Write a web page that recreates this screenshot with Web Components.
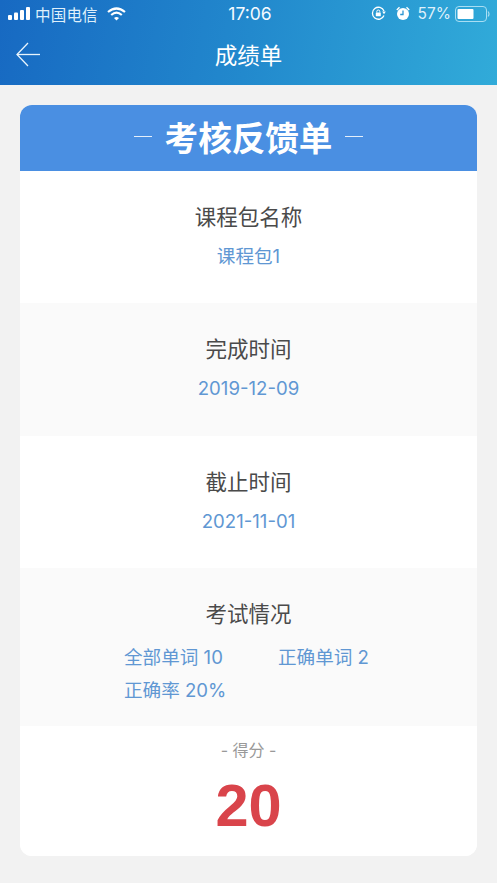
<!DOCTYPE html>
<html lang="zh">
<head>
<meta charset="utf-8">
<title>成绩单</title>
<style>
html, body { margin: 0; padding: 0; }
body {
    width: 497px;
    height: 883px;
    overflow: hidden;
    background: #f2f2f2;
    font-family: Inter, "Noto Sans CJK SC", sans-serif;
}
</style>
</head>
<body>
<app-header titulo="成绩单"></app-header>
<score-card>
    <info-row label="课程包名称" value="课程包1" style="height:132px"></info-row>
    <info-row label="完成时间" value="2019-12-09" alt style="height:133px"></info-row>
    <info-row label="截止时间" value="2021-11-01" style="height:132px"></info-row>
    <exam-row></exam-row>
    <score-total value="20"></score-total>
</score-card>
<script>
"use strict";
class AppHeader extends HTMLElement {
    constructor() {
        super();
        const shadow = this.attachShadow({ mode: "open" });
        shadow.innerHTML = `
        <style>
            :host {
                display: block;
                height: 85px;
                background: linear-gradient(100deg, #1769c2 0%, #2289cd 50%, #31abd9 100%);
                color: #fff;
            }
            #status {
                height: 27px;
                display: grid;
                grid-template-columns: 1fr auto 1fr;
                align-items: center;
                font-size: 15.5px;
                color: #dff0fb;
            }
            #left { display: flex; align-items: center; padding-left: 8px; }
            #left span { margin-left: 5px; letter-spacing: 0.2px; font-size: 15.5px; }
            #left svg.wifi { margin-left: 9px; }
            #time { font-size: 17.5px; color: #f4faff; padding-left: 3px; }
            #right { display: flex; align-items: center; justify-content: flex-end; padding-right: 7px; }
            #right span { margin-left: 7.500px; font-size: 15.5px; }
            #nav {
                height: 58px;
                position: relative;
                display: flex;
                align-items: center;
                justify-content: center;
                font-size: 22.5px;
            }
            #nav p { margin: 0 0 4px; }
            #back { position: absolute; left: 16px; top: 15px; }
        </style>
        <div id="status">
            <div id="left">
                <svg width="22" height="13" viewBox="0 0 22 13" fill="#fff">
                    <rect x="0" y="8" width="4" height="5" rx="1"/>
                    <rect x="6" y="5.500" width="4" height="7.500" rx="1"/>
                    <rect x="12" y="3" width="4" height="10" rx="1"/>
                    <rect x="18" y="0" width="4" height="13" rx="1"/>
                </svg>
                <span>中国电信</span>
                <svg class="wifi" width="19" height="14" viewBox="0 0 19 14" fill="none" stroke="#fff" stroke-width="2.200">
                    <path d="M1 5 Q9.500 -2 18 5"/>
                    <path d="M4.200 8 Q9.500 3.400 14.800 8"/>
                    <path d="M9.500 13.500 L7 11 Q9.500 8.800 12 11 Z" fill="#fff" stroke="none"/>
                </svg>
            </div>
            <div id="time">17:06</div>
            <div id="right">
                <svg width="15" height="15" viewBox="0 0 15 15" fill="none" stroke="#fff" stroke-width="1.300">
                    <path d="M13 9.500 A6 6 0 1 1 13 5"/>
                    <path d="M11.200 5.500 L14.800 5.500 L13 8.300 Z" fill="#fff" stroke="none"/>
                    <rect x="4.800" y="6.500" width="5" height="3.800" rx=".6" fill="#fff" stroke="none"/>
                    <path d="M5.800 6.500 V5.500 A1.500 1.500 0 0 1 8.800 5.500 V6.500" stroke-width="1"/>
                </svg>
                <svg width="14" height="15" viewBox="0 0 14 15" style="margin-left:10px" fill="#fff">
                    <circle cx="7" cy="8" r="6"/>
                    <path d="M7 4.500 V8.500 H4.200" fill="none" stroke="#2b95d2" stroke-width="1.300"/>
                    <path d="M0.300 3.500 L3 0.800 L4 1.800 L1.300 4.500 Z M13.700 3.500 L11 0.800 L10 1.800 L12.700 4.500 Z"/>
                </svg>
                <span>57%</span>
                <svg width="35" height="16" viewBox="0 0 35 16" style="margin-left:4px">
                    <rect x=".5" y=".5" width="31" height="15" rx="3.500" fill="none" stroke="#a9def3" stroke-width="1"/>
                    <rect x="2.500" y="3" width="16" height="10" rx="1" fill="#fff"/>
                    <path d="M33 5.500 Q35 8 33 10.500" fill="none" stroke="#a9def3" stroke-width="1.200"/>
                </svg>
            </div>
        </div>
        <div id="nav">
            <svg id="back" width="25" height="25" viewBox="0 0 25 25" fill="none" stroke="#e8f4fc" stroke-width="1.300">
                <path d="M12 1 L1 12.500 L12 24"/>
                <path d="M1 12.500 H24"/>
            </svg>
            <p id="titulo"></p>
        </div>`;
        this.titulo = shadow.getElementById("titulo");
    }
    connectedCallback() {
        this.titulo.textContent = this.getAttribute("titulo");
    }
}
customElements.define("app-header", AppHeader);

class ScoreCard extends HTMLElement {
    constructor() {
        super();
        const shadow = this.attachShadow({ mode: "open" });
        shadow.innerHTML = `
        <style>
            :host {
                display: block;
                margin: 20px 20px 0;
                background: #fff;
                border-radius: 12px;
                overflow: hidden;
            }
            #head {
                height: 66px;
                box-sizing: border-box;
                padding-bottom: 3px;
                background: #4a8fe2;
                color: #fff;
                display: flex;
                align-items: center;
                justify-content: center;
                gap: 13px;
            }
            #head i { width: 18px; height: 1px; background: #e4effb; display: block; }
            #head b {
                font-size: 33.600px;
                font-weight: 700;
                font-family: "Noto Sans CJK SC", sans-serif;
                line-height: 1;
            }
        </style>
        <div id="head"><i></i><b>考核反馈单</b><i></i></div>
        <slot></slot>`;
    }
}
customElements.define("score-card", ScoreCard);

class InfoRow extends HTMLElement {
    constructor() {
        super();
        const shadow = this.attachShadow({ mode: "open" });
        shadow.innerHTML = `
        <style>
            :host {
                display: block;
                box-sizing: border-box;
                padding-top: 32px;
                text-align: center;
                background: #fff;
            }
            :host([alt]) { background: #fafafa; }
            #label { font-size: 21.500px; line-height: 28px; color: #4a4a4a; }
            #value { margin-top: 12px; font-size: 18.600px; line-height: 26px; color: #6097d3; }
        </style>
        <div id="label"></div>
        <div id="value"></div>`;
        this.label = shadow.getElementById("label");
        this.value = shadow.getElementById("value");
    }
    connectedCallback() {
        this.label.textContent = this.getAttribute("label");
        this.value.textContent = this.getAttribute("value");
    }
}
customElements.define("info-row", InfoRow);

class ExamRow extends HTMLElement {
    constructor() {
        super();
        const shadow = this.attachShadow({ mode: "open" });
        shadow.innerHTML = `
        <style>
            :host {
                display: block;
                box-sizing: border-box;
                height: 158px;
                padding-top: 32px;
                background: #fafafa;
            }
            #label { font-size: 21.500px; line-height: 28px; color: #4a4a4a; text-align: center; }
            #stats {
                margin: 16px 0 0 104px;
                display: grid;
                grid-template-columns: 154px auto;
                row-gap: 7px;
                font-size: 18.600px;
                line-height: 26px;
                color: #6097d3;
            }
        </style>
        <div id="label">考试情况</div>
        <div id="stats">
            <div>全部单词 10</div>
            <div>正确单词 2</div>
            <div>正确率 20%</div>
        </div>`;
    }
}
customElements.define("exam-row", ExamRow);

class ScoreTotal extends HTMLElement {
    constructor() {
        super();
        const shadow = this.attachShadow({ mode: "open" });
        shadow.innerHTML = `
        <style>
            :host {
                display: block;
                height: 130px;
                box-sizing: border-box;
                padding-top: 13px;
                text-align: center;
                background: #fff;
            }
            #label { font-size: 16px; line-height: 22px; color: #999; }
            #num {
                margin-top: 13px;
                font-family: "Liberation Sans", sans-serif;
                font-size: 59.500px;
                line-height: 64px;
                font-weight: 700;
                color: #d9444b;
            }
        </style>
        <div id="label">- 得分 -</div>
        <div id="num"></div>`;
        this.num = shadow.getElementById("num");
    }
    connectedCallback() {
        this.num.textContent = this.getAttribute("value");
    }
}
customElements.define("score-total", ScoreTotal);
</script>
</body>
</html>
